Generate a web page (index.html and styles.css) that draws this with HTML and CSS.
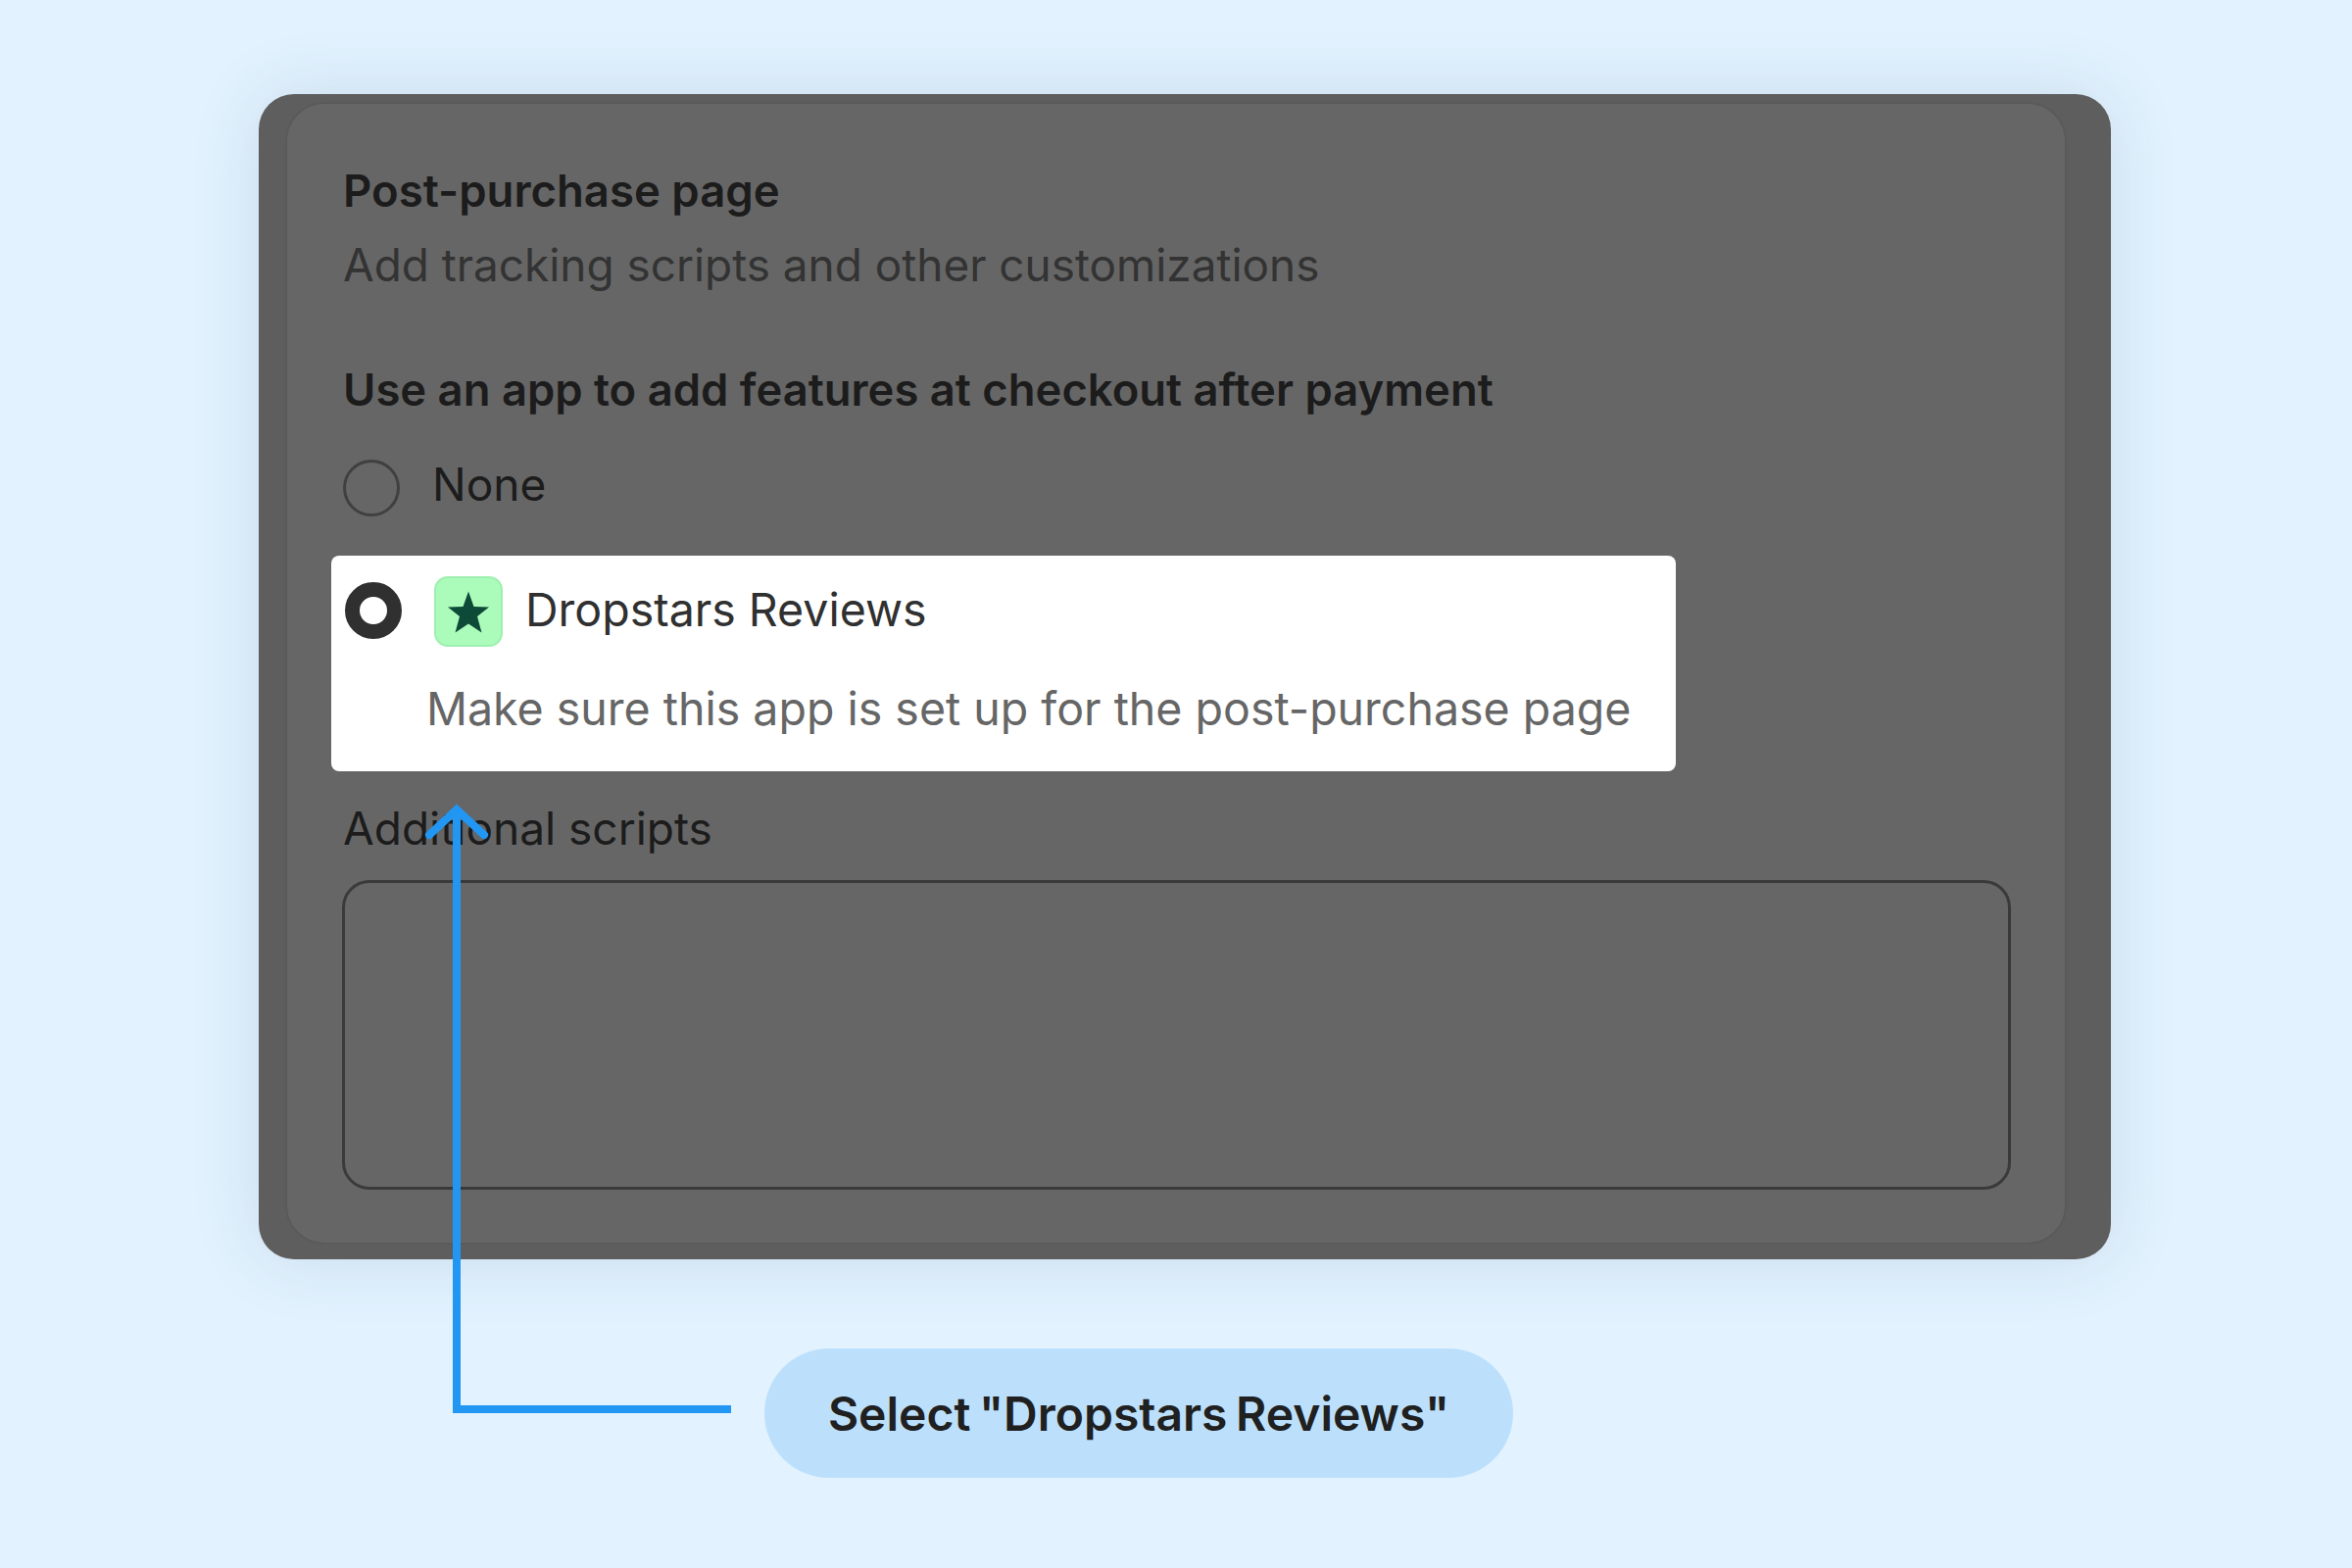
FILE: index.html
```html
<!DOCTYPE html>
<html lang="en">
<head>
<meta charset="utf-8">
<title>Select Dropstars Reviews</title>
<link rel="stylesheet" href="styles.css">
</head>
<body>
<main class="stage">
  <section class="card">
    <div class="panel">
      <h1 class="title">Post-purchase page</h1>
      <p class="subtitle">Add tracking scripts and other customizations</p>
      <h2 class="question">Use an app to add features at checkout after payment</h2>
      <div class="option-none">
        <span class="radio"></span>
        <span class="option-label">None</span>
      </div>
      <div class="highlight">
        <div class="app-row">
          <span class="radio-on"></span>
          <span class="app-icon">
            <svg class="star" viewBox="0 0 42 42" width="42" height="43"><path d="M21 0 L26.5 15.5 L42 16 L30 25.5 L34.5 42 L21 33 L7.5 42 L12 25.5 L0 16 L15.5 15.5 Z"/></svg>
          </span>
          <span class="app-label">Dropstars Reviews</span>
        </div>
        <p class="app-note">Make sure this app is set up for the post-purchase page</p>
      </div>
      <label class="field-label">Additional scripts</label>
      <div class="textarea"></div>
    </div>
  </section>
  <div class="callout">Select "Dropstars Reviews"</div>
  <svg class="arrow" viewBox="0 0 320 640" width="320" height="640">
    <path class="arrow-line" d="M316 621 H36 V12"/>
    <path class="arrow-head" d="M8 35 L36 9 L64 35"/>
  </svg>
</main>
</body>
</html>
```
FILE: styles.css
```css
* { box-sizing: border-box; }
html, body { margin: 0; padding: 0; }
body {
  background: #e2f2ff;
  font-family: "Inter", "Liberation Sans", sans-serif;
  width: 2400px;
  height: 1600px;
  overflow: hidden;
}
.stage {
  position: relative;
  width: 2400px;
  height: 1600px;
  padding: 96px 0 0 264px;
}
.card {
  width: 1890px;
  height: 1189px;
  padding: 8px 45px 15px 27px;
  background: #5e5e5e;
  border-radius: 36px;
  box-shadow: 0 0 70px rgba(60, 85, 100, 0.14);
}
.panel {
  height: 100%;
  padding: 61px 56px 0 57px;
  background: #666666;
  border: 2px solid #5a5a5a;
  border-radius: 40px;
}
.title {
  margin: 0;
  font-size: 45.5px;
  line-height: 56px;
  font-weight: 600;
  color: #1c1c1c;
}
.subtitle {
  margin: 20px 0 0;
  font-size: 45.9px;
  line-height: 56px;
  font-weight: 400;
  color: #333333;
}
.question {
  margin: 71px 0 0;
  font-size: 45.4px;
  line-height: 56px;
  font-weight: 600;
  color: #1c1c1c;
}
.option-none {
  display: flex;
  align-items: flex-start;
  gap: 33px;
  margin-top: 40px;
}
.radio {
  width: 58px;
  height: 58px;
  margin-top: 3px;
  border: 3px solid #404040;
  border-radius: 50%;
}
.option-label {
  font-size: 46px;
  line-height: 56px;
  color: #1c1c1c;
}
.highlight {
  width: 1372px;
  height: 220px;
  margin: 40px 0 0 -12px;
  padding: 21px 0 0 14px;
  background: #ffffff;
  border-radius: 8px;
}
.app-row {
  display: flex;
  align-items: center;
}
.radio-on {
  width: 58px;
  height: 58px;
  margin-top: -3px;
  border: 15px solid #303030;
  border-radius: 50%;
  background: #ffffff;
}
.app-icon {
  display: flex;
  align-items: center;
  justify-content: center;
  width: 70px;
  height: 72px;
  margin-left: 33px;
  background: #abfbba;
  border: 2px solid #9ff0b0;
  border-radius: 14px;
}
.star { fill: #0e4a38; }
.app-label {
  margin-left: 23px;
  margin-top: -4px;
  font-size: 46.5px;
  line-height: 56px;
  color: #303030;
}
.app-note {
  margin: 35px 0 0 83px;
  font-size: 46.5px;
  line-height: 56px;
  color: #666666;
}
.field-label {
  display: block;
  margin-top: 30px;
  font-size: 46px;
  line-height: 56px;
  color: #1c1c1c;
}
.textarea {
  width: 1703px;
  height: 316px;
  margin: 25px 0 0 -1px;
  border: 3px solid #3a3a3a;
  border-radius: 28px;
}
.callout {
  position: absolute;
  left: 780px;
  top: 1376px;
  width: 764px;
  height: 132px;
  display: flex;
  align-items: center;
  justify-content: center;
  background: #bce0fc;
  border-radius: 66px;
  font-size: 48px;
  font-weight: 600;
  word-spacing: -3.5px;
  color: #202020;
}
.arrow {
  position: absolute;
  left: 430px;
  top: 817px;
  overflow: visible;
  fill: none;
}
.arrow-line {
  stroke: #2196f3;
  stroke-width: 8;
}
.arrow-head {
  stroke: #2196f3;
  stroke-width: 8;
  stroke-linecap: round;
  stroke-linejoin: miter;
}
```
